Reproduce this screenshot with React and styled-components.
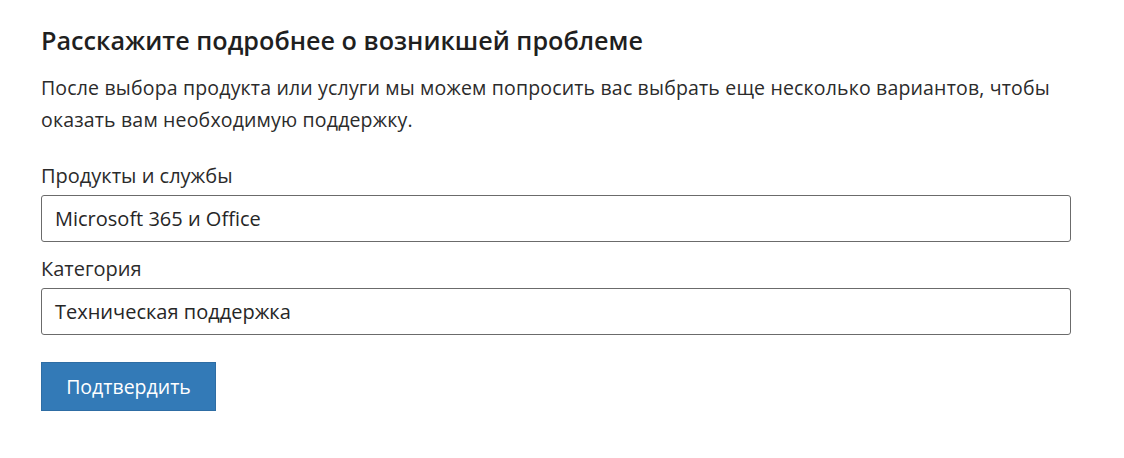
import React from "react"
import styled, {createGlobalStyle} from "styled-components"

const GlobalStyle = createGlobalStyle`
  html, body {
    margin: 0;
    padding: 0;
    background: #fff;
  }
  body {
    font-family: "Open Sans", "Noto Sans", "Liberation Sans", sans-serif;
    color: #262626;
  }
`

const Page = styled.div`
  width: 1030px;
  padding: 24px 0 0 41px;
`

const Title = styled.h2`
  margin: 0;
  font-size: 25.2px;
  font-weight: 600;
  line-height: 32px;
  color: #1f1f1f;
`

const Intro = styled.p`
  margin: 16px 0 0;
  font-size: 19.5px;
  line-height: 32px;
  color: #2b2b2b;
  letter-spacing: 0.17px;
`

const Field = styled.div`
  display: flex;
  flex-direction: column;
  margin-top: ${p => p.$top}px;
`

const Label = styled.label`
  font-size: 20px;
  line-height: 24px;
  color: #2b2b2b;
  margin-bottom: 7px;
`

const Box = styled.div`
  height: 47px;
  box-sizing: border-box;
  border: 1px solid #6b6b6b;
  border-radius: 3px;
  padding: 0 13px;
  display: flex;
  align-items: center;
  font-size: 20px;
  color: #262626;
`

const SubmitButton = styled.button`
  margin-top: 27px;
  width: 175px;
  height: 49px;
  background: #337ab7;
  border: 1px solid #2e6da4;
  color: #fff;
  font-family: inherit;
  font-size: 19.5px;
  cursor: pointer;
`

export default function App() {
  return (
    <Page>
      <GlobalStyle/>
      <Title>Расскажите подробнее о возникшей проблеме</Title>
      <Intro>
        После выбора продукта или услуги мы можем попросить вас выбрать еще несколько вариантов, чтобы
        оказать вам необходимую поддержку.
      </Intro>
      <Field $top={28}>
        <Label>Продукты и службы</Label>
        <Box>Microsoft 365 и Office</Box>
      </Field>
      <Field $top={15}>
        <Label>Категория</Label>
        <Box>Техническая поддержка</Box>
      </Field>
      <SubmitButton>Подтвердить</SubmitButton>
    </Page>
  )
}
